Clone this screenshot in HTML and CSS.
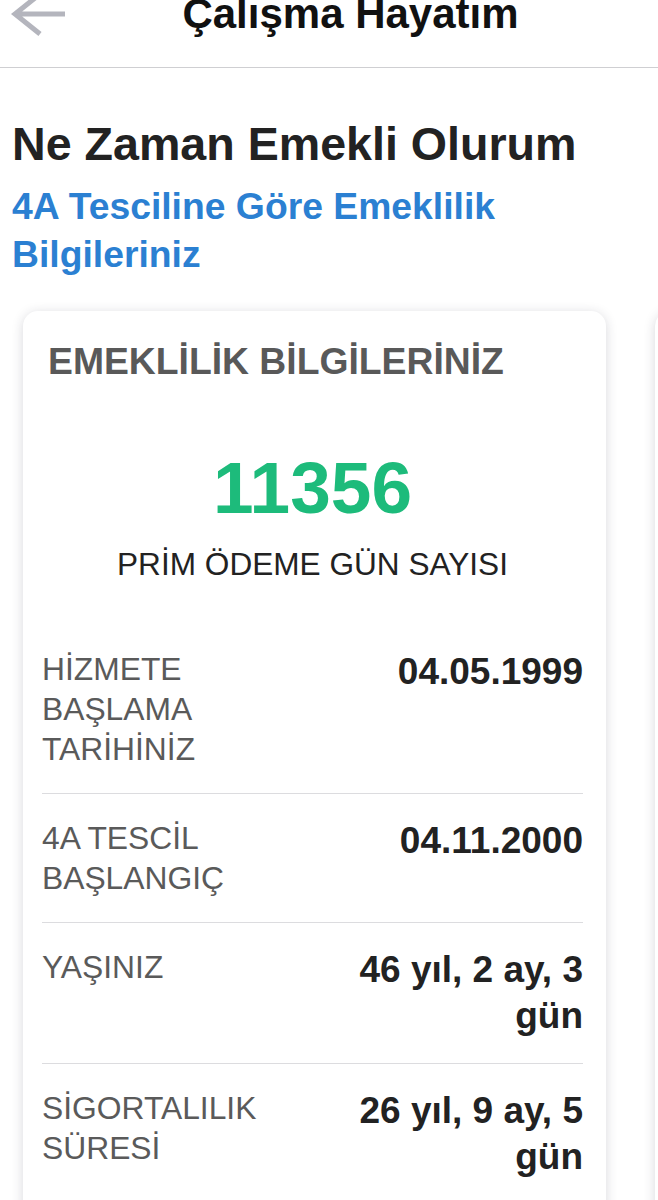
FILE: index.html
```html
<!DOCTYPE html>
<html lang="tr">
<head>
    <meta charset="UTF-8">
    <meta name="viewport" content="width=device-width, initial-scale=1.0">
    <title>Çalışma Hayatım</title>
    <link rel="stylesheet" href="styles.css">
</head>
<body>
    <header class="topbar">
        <a class="back" href="#" aria-label="Geri">
            <svg width="60" height="48" viewBox="0 0 60 48">
                <path d="M58 24H8M33 4L8 24L33 44" fill="none" stroke="#b4b5bd" stroke-width="5"/>
            </svg>
        </a>
        <div class="topbar-title">Çalışma Hayatım</div>
    </header>

    <main class="page">
        <h1>Ne Zaman Emekli Olurum</h1>
        <h2 class="subtitle">4A Tesciline Göre Emeklilik Bilgileriniz</h2>

        <div class="cards">
            <section class="card">
                <h3 class="card-title">EMEKLİLİK BİLGİLERİNİZ</h3>
                <div class="big-number">11356</div>
                <div class="big-label">PRİM ÖDEME GÜN SAYISI</div>

                <div class="info-row">
                    <div class="info-label">HİZMETE BAŞLAMA TARİHİNİZ</div>
                    <div class="info-value">04.05.1999</div>
                </div>
                <div class="info-row">
                    <div class="info-label">4A TESCİL BAŞLANGIÇ</div>
                    <div class="info-value">04.11.2000</div>
                </div>
                <div class="info-row">
                    <div class="info-label">YAŞINIZ</div>
                    <div class="info-value">46 yıl, 2 ay, 3 gün</div>
                </div>
                <div class="info-row">
                    <div class="info-label">SİGORTALILIK SÜRESİ</div>
                    <div class="info-value">26 yıl, 9 ay, 5 gün</div>
                </div>
            </section>
            <section class="card" aria-hidden="true"></section>
        </div>
    </main>
</body>
</html>
```

FILE: styles.css
```css
body { margin: 0; font-family: "Liberation Sans", Arial, sans-serif; background-color: #fff; color: #222; overflow: hidden; }

.topbar { display: flex; align-items: center; box-sizing: border-box; height: 107px; margin-top: -39px; border-bottom: 1px solid #cfcfd2; }
.back { display: block; width: 60px; height: 48px; margin-left: 7px; }
.back svg { display: block; }
.topbar-title { flex: 1; text-align: center; padding-right: 24px; font-size: 42px; font-weight: bold; line-height: 56px; color: #111; }

.page { padding: 48px 0 0 12px; }
h1 { margin: 0; font-size: 46.6px; line-height: 56px; font-weight: bold; color: #222; }
.subtitle { margin: 10px 0 0; width: 520px; font-size: 37.3px; line-height: 48px; font-weight: bold; color: #2b80d2; }

.cards { display: flex; gap: 49px; margin: 33px 0 0 -12px; padding: 0 0 40px 23px; }
.card { flex: 0 0 583px; box-sizing: border-box; padding: 28px 23px 0 19px; background-color: #fff; border-radius: 15px; box-shadow: 0 2px 12px rgba(40,40,60,0.18); min-height: 1000px; }
.card-title { margin: 0; padding-left: 6px; font-size: 37.3px; line-height: 44px; font-weight: bold; color: #595959; }
.big-number { margin-top: 65px; text-align: center; font-size: 73px; line-height: 80px; font-weight: bold; color: #1dbb7b; }
.big-label { margin-top: 16px; margin-bottom: 41px; text-align: center; font-size: 31.6px; line-height: 40px; color: #222; }

.info-row { display: grid; grid-template-columns: 1fr 1fr; column-gap: 20px; padding: 24px 0; border-bottom: 1px solid #dcdcdf; }
.info-label { font-size: 31.8px; line-height: 40px; color: #5a5a5a; }
.info-value { text-align: right; font-size: 37px; line-height: 46px; font-weight: bold; color: #222; }
```
